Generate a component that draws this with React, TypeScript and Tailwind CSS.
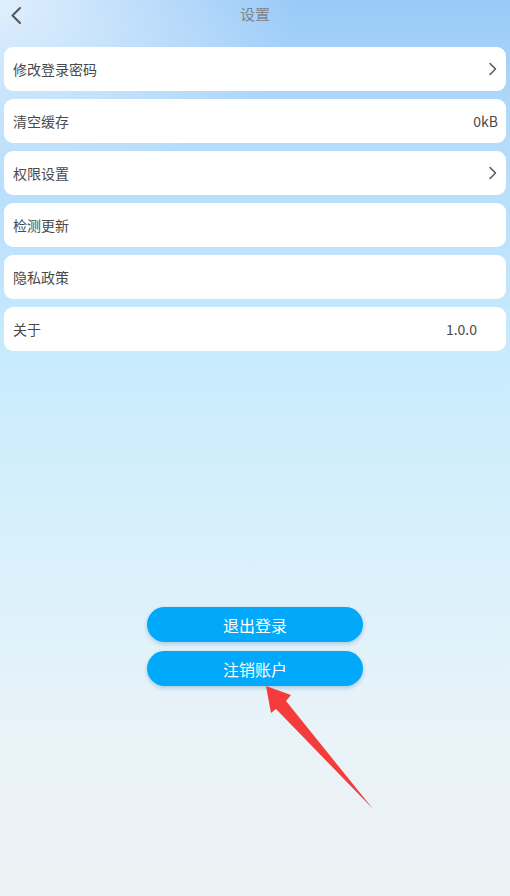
import React from "react";

type Row = { label: string; value?: string; arrow?: boolean; valuePad?: boolean };

const ROWS: Row[] = [
  { label: "修改登录密码", arrow: true },
  { label: "清空缓存", value: "0kB" },
  { label: "权限设置", arrow: true },
  { label: "检测更新" },
  { label: "隐私政策" },
  { label: "关于", value: "1.0.0", valuePad: true },
];

const FONT = "font-['Noto_Sans_CJK_SC','Noto_Sans',Roboto,sans-serif]";

function ChevronRight() {
  return (
    <svg width="10" height="14" viewBox="0 0 10 14" fill="none" aria-hidden>
      <path d="M2 1.5 L7.5 7 L2 12.5" stroke="#555" strokeWidth="1.5" strokeLinecap="round" strokeLinejoin="round" />
    </svg>
  );
}

function SettingRow({ row }: { row: Row }) {
  return (
    <div className="flex h-[44px] items-center justify-between rounded-[9px] bg-white pl-[9px] pr-[8px]">
      <span className="text-[14px] text-[#4a4a4a]">{row.label}</span>
      {row.arrow && <ChevronRight />}
      {row.value && (
        <span className={`text-[14px] text-[#4a4a4a] ${row.valuePad ? "pr-[21px]" : ""}`}>{row.value}</span>
      )}
    </div>
  );
}

export default function App() {
  return (
    <div
      className={`relative min-h-[896px] w-full overflow-hidden ${FONT} bg-[radial-gradient(300px_190px_at_0_0,rgba(255,255,255,0.7)_0%,rgba(255,255,255,0.35)_50%,rgba(255,255,255,0)_100%),linear-gradient(180deg,#98c9f8_0%,#b2dbfb_14%,#c8ebfd_40%,#dcf1fb_65%,#e9f3f8_82%,#edf1f4_100%)]`}
    >
      {/* Title bar */}
      <div className="relative flex h-[28px] items-center justify-center">
        <button className="absolute left-[9px] top-[6px] p-0" aria-label="返回">
          <svg width="14" height="18" viewBox="0 0 14 18" fill="none" aria-hidden>
            <path d="M11 2 L3.5 9.5 L11 17" stroke="#555" strokeWidth="2" strokeLinecap="round" strokeLinejoin="round" />
          </svg>
        </button>
        <span className="text-[15px] text-[#7d8590]">设置</span>
      </div>

      {/* Settings list */}
      <div className="mt-[19px] flex flex-col gap-[8px] px-[4px]">
        {ROWS.map((r) => (
          <SettingRow key={r.label} row={r} />
        ))}
      </div>

      {/* Actions */}
      <div className="mt-[256px] flex flex-col items-center gap-[9px]">
        <button className="h-[35px] w-[216px] rounded-full bg-[#02a9fb] text-[16px] text-white shadow-[0_2px_4px_rgba(0,80,140,0.25)]">
          退出登录
        </button>
        <button className="h-[35px] w-[216px] rounded-full bg-[#02a9fb] text-[16px] text-white shadow-[0_2px_4px_rgba(0,80,140,0.25)]">
          注销账户
        </button>
      </div>

      {/* Annotation arrow */}
      <svg
        className="pointer-events-none absolute left-0 top-0"
        width="510"
        height="896"
        viewBox="0 0 510 896"
        aria-hidden
      >
        <polygon points="266,686 291,695 286,701 373,809 276,709 271,713" fill="#f43c3c" />
      </svg>
    </div>
  );
}
